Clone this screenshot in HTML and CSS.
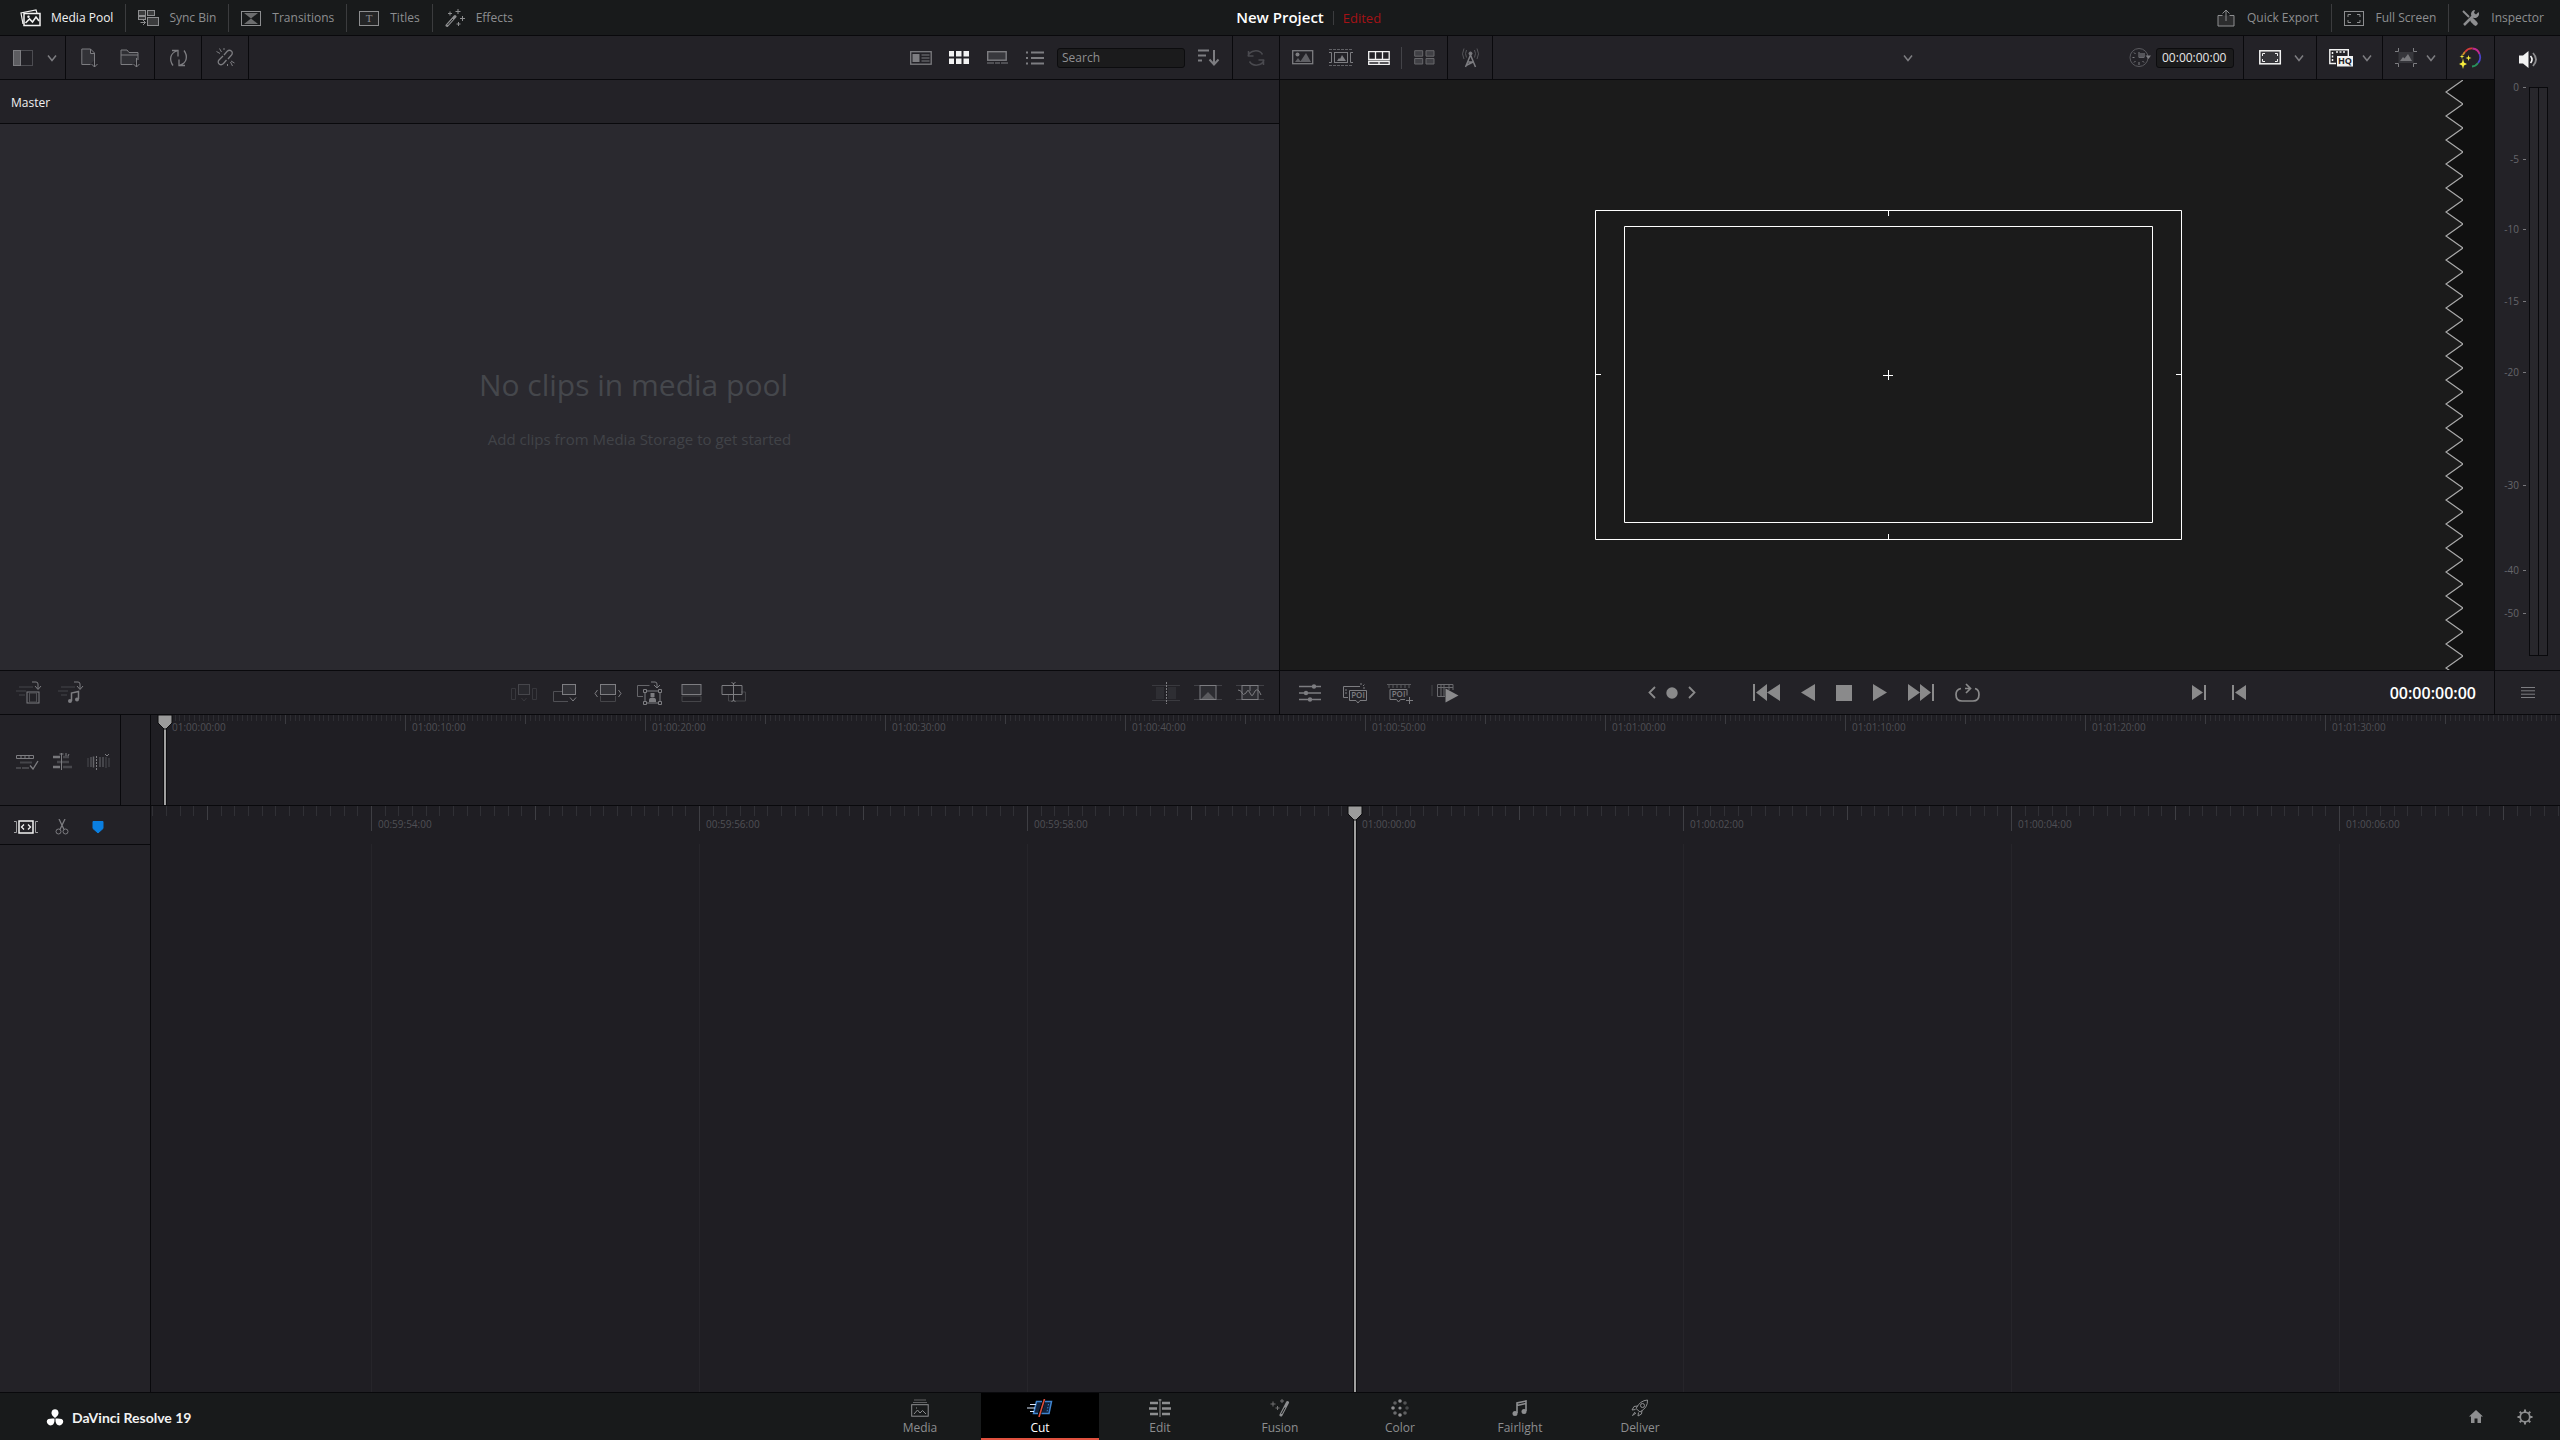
FILE: index.html
```html
<!DOCTYPE html>
<html lang="en">
<head>
<meta charset="utf-8">
<title>New Project</title>
<link rel="stylesheet" href="styles.css">
</head>
<body>
<svg class="defs" width="0" height="0" aria-hidden="true">
  <defs>
    <pattern id="p-overview" width="48" height="6" patternUnits="userSpaceOnUse">
      <path d="M.5 0v6M5.5 0v6M10.5 0v6M14.5 0v6M19.5 0v6M24.5 0v6M29.5 0v6M34.5 0v6M38.5 0v6M43.5 0v6" stroke="#2d2d32"/>
    </pattern>
    <pattern id="p-detail" width="41" height="10" patternUnits="userSpaceOnUse">
      <path d="M.5 0v10M14.5 0v10M27.5 0v10" stroke="#303035"/>
    </pattern>
    <pattern id="p-zig" width="18" height="24" patternUnits="userSpaceOnUse">
      <path d="M18 0L1 12L18 24V0z" fill="#101010" stroke="none"/>
      <path d="M18 0L1 12L18 24" fill="none" stroke="#a9a9a9" stroke-width="1.2"/>
    </pattern>
    <symbol id="chev" viewBox="0 0 10 8"><path d="M1 1.5L5 6.5L9 1.5" stroke-width="1.5"/></symbol>
    <symbol id="t240" viewBox="0 0 240 20"><rect width="240" height="6" fill="url(#p-overview)" stroke="none"/><path d="M.5 0v16M120.5 0v9" stroke="#3b3b40"/></symbol>
    <symbol id="t328" viewBox="0 0 328 26"><rect width="328" height="10" fill="url(#p-detail)" stroke="none"/><path d="M.5 0v25M164.5 0v14" stroke="#3e3e43"/></symbol>
    <symbol id="head" viewBox="0 0 16 16"><path d="M1 0h14v8L9 14H7L1 8z" fill="#9b9b9b" stroke="#0c0c0e"/></symbol>
  </defs>
</svg>
<div class="app">
  <header class="topbar">
    <nav class="tools" aria-label="Panels">
      <button class="on"><svg width="21" height="18"><path d="M3 15L1 4L16 1l1 3" stroke-width="1.2"/><rect x="4" y="4.500" width="16" height="12" stroke-width="1.5"/><path d="M5.500 14l4-4 3 3 3.500-5 3 4" stroke-width="1.6"/><circle cx="8.500" cy="7.800" r="1.2" fill="currentColor" stroke="none"/></svg>Media Pool</button>
      <button><svg width="21" height="18"><g fill="#3b3c3d"><rect x=".5" y="1.500" width="7" height="5"/><rect x="9.500" y="1.500" width="7" height="5"/><rect x=".5" y="7.500" width="7" height="3"/><rect x="9.500" y="8.500" width="11" height="8"/></g><path d="M2.500 13.500h5M5 11l2.500 2.500L5 16"/></svg>Sync Bin</button>
      <button><svg width="21" height="18"><rect x=".5" y="2.500" width="19" height="14"/><path d="M3 4h14L10 9.500zM3 15h14L10 9.500z" fill="#6c6d6e" stroke="none"/></svg>Transitions</button>
      <button><svg width="21" height="18"><rect x=".5" y="2.500" width="19" height="14" fill="#242526"/><text class="glyph serif" x="10" y="13" text-anchor="middle">T</text></svg>Titles</button>
      <button><svg width="21" height="20"><path d="M2 17.500L10 8.500" stroke-width="3" stroke-linecap="round"/><path d="M2.500 17L8 11" stroke="#181a1b" stroke-width="1"/><path d="M13 1v5M10.500 3.500h5M17.500 8v5M15 10.500h5M13.500 14v4M11.500 16h4M5 3.500v4M3 5.500h4"/></svg>Effects</button>
    </nav>
    <h1>New Project</h1>
    <div class="right">
      <span class="edited">Edited</span>
      <nav class="tools" aria-label="Workspace">
        <button><svg width="19" height="18"><path d="M5.500 6.500H1v10.500h16V6.500h-4.500" fill="#2c2d2e"/><path d="M9 12V1.500M5.500 4.500L9 1l3.500 3.500"/></svg>Quick Export</button>
        <button><svg width="21" height="18"><rect x=".5" y="2.500" width="19" height="14"/><path d="M4 8V5.500h3M13 5.500h3V8M16 11v2.500h-3M7 13.500H4V11"/></svg>Full Screen</button>
        <button><svg width="19" height="18"><path d="M2 2l6 6" stroke-width="2"/><path d="M11.500 11.500l3 3" stroke-width="4.500" stroke-linecap="round"/><path d="M3 16L12 7" stroke-width="2.500"/><path d="M17.500 3a4 4 0 1 1-3.500-2l-1 3 2 1.500z" fill="currentColor" stroke="none"/></svg>Inspector</button>
      </nav>
    </div>
  </header>

  <main class="upper">
    <section class="panel" aria-label="Media Pool">
      <div class="toolbar">
        <div class="grp g-first">
          <button aria-label="Sidebar"><svg width="21" height="18"><rect x=".5" y="1.500" width="19" height="15" stroke="#4c4c51"/><rect x=".5" y="1.500" width="7" height="15" fill="#5d5d61"/></svg></button>
          <button aria-label="Sidebar options"><svg width="10" height="8"><use href="#chev"/></svg></button>
        </div>
        <div class="grp b40">
          <button aria-label="Import media"><svg width="18" height="20"><path d="M9.500 16.500H.8V1h8.700l4 4v7M9.500 1v4.500h4" fill="#333338"/><path d="M13.500 8v11M10.500 16l3 3 3-3"/></svg></button>
          <button aria-label="Import folder"><svg width="21" height="20"><path d="M12.500 16.500H1V2h6l2 2.500h9V12M1 7h17" fill="#303035"/><path d="M16.500 10v9M13.500 16l3 3 3-3"/></svg></button>
        </div>
        <div class="grp b46"><button aria-label="Sync clips"><svg width="19" height="18"><g stroke-width="1.300"><path d="M4 16.500C0 11 1 4 8 2M3 1.500h6v6"/><path d="M15 1.500C19 7 18 14 11 16M16 16.500h-6v-6"/></g></svg></button></div>
        <div class="grp b46"><button aria-label="Unlink clips"><svg width="19" height="19"><path d="M8 7l3-3.500c3-3 7 .5 4.500 3.500L12 11M10.500 12l-3 3.500c-3 3-7-.5-4.500-3.500L7 8" stroke-width="1.300"/><path d="M.5 3.500L4 5.500M3.500.5l2 3.500M8 0v2M14.500 14l2 4M15 13l3.500 2M11.500 16v2"/></svg></button></div>
        <div class="grp push b38">
          <button aria-label="Metadata view"><svg width="22" height="14"><rect x=".7" y=".7" width="20.500" height="12.500" stroke-width="1.300"/><path d="M2.500 3h7v8h-7z" fill="currentColor" stroke="none"/><path d="M11.500 4h8M11.500 7h8M11.500 10h8"/></svg></button>
          <button class="on" aria-label="Thumbnail view"><svg width="20" height="13"><path d="M0 0h5v5.500H0zM7 0h5.500v5.500H7zM14.500 0H20v5.500h-5.500zM0 7.500h5V13H0zM7 7.500h5.500V13H7zM14.500 7.500H20V13h-5.500z" fill="currentColor" stroke="none"/></svg></button>
          <button aria-label="Filmstrip view"><svg width="21" height="13"><rect x=".7" y=".7" width="18.500" height="8.500" fill="#38383d" stroke-width="1.400"/><path d="M0 12h7M8 12h5M14 12h7"/></svg></button>
          <button aria-label="List view"><svg width="18" height="14"><path d="M0 1.500h2M0 7h2M0 12.500h2M5 1.500h13M5 7h13M5 12.500h13" stroke-width="2"/></svg></button>
        </div>
        <input class="search" type="text" placeholder="Search" aria-label="Search">
        <div class="grp b46"><button aria-label="Sort"><svg width="22" height="17"><path d="M0 1.500h11M0 6.500h8M0 11.500h4M16 1v14M11.500 10.500l4.500 5 4.500-5" stroke-width="2"/></svg></button></div>
        <div class="grp b46 last"><button class="dim" aria-label="Refresh"><svg width="18" height="18"><path d="M1 7C3 1 12 0 15.500 5.500M1.500 2v5h5M17 11c-2 6-11 7-14.500 1.500M16.500 16v-5h-5" stroke-width="1.500"/></svg></button></div>
      </div>
      <h2 class="bin">Master</h2>
      <div class="empty"><p class="big">No clips in media pool</p><p>Add clips from Media Storage to get started</p></div>
      <div class="actions pool-actions">
        <div class="row b42">
          <button aria-label="Video only"><svg width="26" height="23"><path d="M3 6h14M0 10h10M3 14h6" stroke="#3a3a3f" stroke-width="1.500"/><path d="M16 1h4q2 0 2 2v5M19 5l3 3.500L25 5"/><rect x="11" y="11" width="12" height="11"/><rect x="13.500" y="12" width="7" height="9" stroke="#505055"/></svg></button>
          <button aria-label="Audio only"><svg width="26" height="23"><path d="M3 6h14M0 10h10M3 14h6" stroke="#3a3a3f" stroke-width="1.500"/><path d="M16 1h4q2 0 2 2v5M19 5l3 3.500L25 5"/><path d="M13.500 20v-8l7-1.500V18" stroke-width="1.500"/><circle cx="12" cy="20" r="2" fill="currentColor" stroke="none"/><circle cx="19" cy="18.500" r="2" fill="currentColor" stroke="none"/></svg></button>
        </div>
        <div class="row b42 mid">
          <button class="faint" aria-label="Smart insert"><svg width="26" height="20"><path d="M.5 5.500h4v11h-4zM21.500 5.500h4v11h-4z"/><rect x="7.500" y="1.500" width="11" height="10" fill="#29292e" stroke="#46464b"/><path d="M10.500 15l2.500 3 2.500-3"/></svg></button>
          <button aria-label="Append"><svg width="26" height="20"><path d="M9 8.500H.5v10H15" stroke="#505055"/><rect x="9.500" y="1.500" width="13" height="10" fill="#333338"/><path d="M17 14.500l3 3.500 3-3.500"/></svg></button>
          <button aria-label="Ripple overwrite"><svg width="28" height="20"><path d="M6.500 13v5.500h15V13" stroke="#454549"/><rect x="6.500" y="1.500" width="15" height="10" fill="#333338"/><path d="M3.500 7L1 10.500 3.500 14M24.500 7l2.500 3.500-2.500 3.500"/></svg></button>
          <button aria-label="Close up"><svg width="26" height="24"><path d="M6 15.500H.5v-11h12" stroke="#66666a"/><path d="M14 1h4q2 0 2 2v3M17 4l3 3 3-3"/><rect x="8" y="10" width="15" height="12"/><path d="M12 21v-2q0-2.500 3.500-2.500t3.500 2.500v2zM13.500 12h4v4h-4z" fill="currentColor" stroke="none"/><path d="M6.500 8.500h3v3h-3zM21.500 8.500h3v3h-3zM6.500 20.500h3v3h-3zM21.500 20.500h3v3h-3z" fill="#232227"/></svg></button>
          <button aria-label="Place on top"><svg width="22" height="20"><path d="M1 13v5.500h19V13z" stroke="#454549"/><rect x="1" y="1.500" width="19" height="10" fill="#333338"/></svg></button>
          <button aria-label="Source overwrite"><svg width="26" height="21"><path d="M20 10h4.500v9h-17v-6" stroke="#454549"/><path d="M1 3.500h20v9H1zM12.500 1v18"/><path d="M10.500 0l2 2 2-2M10.500 20l2-2 2 2"/></svg></button>
        </div>
        <div class="row b42 end">
          <button aria-label="Cut"><svg width="28" height="22"><path d="M0 3.500h28M0 18.500h28" stroke="#3a3a3f"/><path d="M4 5h8v12H4zM16 5h8v12h-8z" fill="#2e2e33" stroke="none"/><path d="M14.500 0v22" stroke-dasharray="2 1"/></svg></button>
          <button aria-label="Dissolve"><svg width="28" height="18"><path d="M0 1.500h28M0 15.500h28" stroke="#414146"/><rect x="6" y="1.500" width="16" height="14" fill="#2d2d32"/><path d="M14 2v6L7 15h14l-7-7" fill="#5a5a5e" stroke="none"/></svg></button>
          <button aria-label="Smooth cut"><svg width="28" height="18"><path d="M0 1.500h28M0 15.500h28" stroke="#414146"/><rect x="6" y="1.500" width="16" height="14" fill="#2d2d32"/><path d="M2 6q3 0 4 3t4 0q2-5 4 0t4 0q2-5 5-2l2 4M14 2v5"/></svg></button>
        </div>
      </div>
    </section>

    <section class="panel" aria-label="Viewer">
      <div class="toolbar">
        <div class="grp b38 views">
          <button aria-label="Source clip"><svg width="22" height="15"><rect x=".7" y=".7" width="20" height="13" stroke-width="1.300"/><circle cx="5.500" cy="4.500" r="2" fill="currentColor" stroke="none"/><path d="M3 12l3-4 3 4M8 12l6-9 5 9z" fill="#606065" stroke="none"/></svg></button>
          <button aria-label="Source tape"><svg width="24" height="17"><path d="M0 .5h24M0 16.500h24" stroke-dasharray="3 1" stroke="#606065"/><rect x="5.500" y="3.500" width="13" height="10"/><path d="M0 3.500h2.500v10H0M24 3.500h-2.500v10H24"/><path d="M8 12l2-3 1 1 2-4 4 6z" fill="currentColor" stroke="none"/></svg></button>
          <button class="on" aria-label="Timeline"><svg width="22" height="14"><path d="M.7.7h20.500v7.800H.7zM.7 10.500h20.500v2.800H.7zM7.500 1v7M14.500 1v7M11 10.500v3" stroke-width="1.300"/></svg></button>
          <span class="tick"></span>
          <button aria-label="Multi view"><svg width="21" height="15"><path d="M.7.7h8v5.500h-8zM12 .7h8v5.500h-8zM.7 8.500h8V14h-8zM12 8.500h8V14h-8z" fill="#404045" stroke="#67676b"/></svg></button>
        </div>
        <div class="grp b44"><button aria-label="Live overwrite"><svg width="17" height="20"><path d="M8.500 7L3.500 19M8.500 7l5 12M5 14h7M4 17.500l8-4" stroke-width="1.500"/><circle cx="8.500" cy="5.500" r="1.500" fill="currentColor"/><path d="M4.500 9.500q-2-4 0-7.500M12.500 9.500q2-4 0-7.500M2 11q-3-5 0-10.500M15 11q3-5 0-10.500" stroke="#56565a"/></svg></button></div>
        <div class="title-menu"><button aria-label="Timelines"><svg width="10" height="8"><use href="#chev"/></svg></button></div>
        <div class="grp tc">
          <button aria-label="Timeline duration"><svg width="22" height="21"><circle cx="10" cy="10.500" r="9" stroke="#5a5a5f"/><path d="M10 5v5.500h5M10 15v3M3.500 10.500h2M5 5.500l1.500 1.500M5 15.500L6.500 14M15 15.500L13.500 14"/><path d="M10 6h6v4.500h-6z" fill="#55555a" stroke="none"/><path d="M16.500 8.500h5.500L19.500 12z" fill="currentColor" stroke="none"/></svg></button>
          <input class="timecode" type="text" value="00:00:00:00" aria-label="Duration">
        </div>
        <div class="grp g-ar">
          <button class="on" aria-label="Resolution"><svg width="23" height="15"><rect x=".8" y=".8" width="20.500" height="13" fill="#35353a" stroke-width="1.500"/><path d="M3.500 6V3.500H6M16 3.500h2.500V6M18.500 9v2.500H16M6 11.500H3.500V9"/></svg></button>
          <button aria-label="Resolution options"><svg width="10" height="8"><use href="#chev"/></svg></button>
        </div>
        <div class="grp g-drop">
          <button class="on" aria-label="Proxy quality"><svg width="24" height="18"><path d="M7 14.500H.8V.8h18.500V7" stroke-width="1.400"/><path d="M3.500 3v10M7 3h10" stroke-dasharray="2 1.500" stroke-width="1.500"/><rect x="8" y="7" width="16" height="10.500" fill="#f2f2f2" stroke="none"/><text class="glyph dark" x="16" y="15" text-anchor="middle">HQ</text></svg></button>
          <button aria-label="Proxy options"><svg width="10" height="8"><use href="#chev"/></svg></button>
        </div>
        <div class="grp g-drop">
          <button aria-label="Transform overlay"><svg width="22" height="19"><path d="M0 3.500h3.500V0M22 3.500h-3.500V0M0 15.500h3.500V19M22 15.500h-3.500V19"/><path d="M3.500 4h15v11h-15z" fill="#36363b" stroke="none"/><path d="M5 13l3-4 1.500 1.500L13 6l4 7z" fill="#77777b" stroke="none"/></svg></button>
          <button aria-label="Overlay options"><svg width="10" height="8"><use href="#chev"/></svg></button>
        </div>
        <div class="grp b46"><button aria-label="Bypass grades"><svg width="23" height="22"><g stroke-width="1.800"><path d="M6 5Q9 1 13.500 1.500" stroke="#d43b3b"/><path d="M13.500 1.500Q19 2 20.500 7" stroke="#c02a8f"/><path d="M20.500 7Q22.500 12 19 16" stroke="#4a43c8"/><path d="M19 16q-2 3-6 3.500" stroke="#28905c"/><path d="M6 5Q4.500 6.500 4 8" stroke="#cf8a28"/></g><path d="M4 11.500l1 4 3 1.500-3 1.500-1 3.500-1-3.500L0 17l3-1.500zM9.500 8l.7 2.300 2.300.7-2.300.7-.7 2.300-.7-2.300-2.300-.7 2.300-.7zM3 7l.6 1.900L5.500 9.500l-1.900.6L3 12l-.6-1.900L.5 9.500l1.900-.6z" fill="#f5ec3d" stroke="none"/></svg></button></div>
      </div>
      <div class="screen">
        <svg class="safe" viewBox="0 0 588 330" width="588" height="330"><path d="M.5.5h586v329H.5zM29.500 16.500h528v296h-528zM293.500 1v5M293.500 324v5M1 164.500h5M581 164.500h5M288 165.500h10M293.500 160v10" stroke="#fff"/></svg>
        <svg class="zigzag" width="18" height="100%"><rect width="18" height="100%" fill="url(#p-zig)" stroke="none"/></svg>
        <div class="margin"></div>
      </div>
      <div class="actions viewer-actions">
        <div class="row b45">
          <button aria-label="Tools"><svg width="22" height="18"><path d="M0 2.500h22M0 9h22M0 15.500h22" stroke-width="1.500"/><circle cx="15" cy="2.500" r="2.200" fill="currentColor" stroke="none"/><circle cx="7" cy="9" r="2.200" fill="currentColor" stroke="none"/><circle cx="11" cy="15.500" r="2.200" fill="currentColor" stroke="none"/></svg></button>
          <button aria-label="POI list"><svg width="24" height="22"><path d="M5 15.500H.5v-11H17" /><path d="M3 7v6M18 1v3M20 4l2-2M20 6h3" stroke-dasharray="2 1"/><path d="M6.500 8.500h17v10H17L15 21l-2-2.500H6.500z" fill="#232227"/><text class="glyph" x="15" y="16" text-anchor="middle">POI</text></svg></button>
          <button aria-label="Add POI"><svg width="26" height="22"><path d="M0 2.500h24M2 3v3M6 3v3M10 3v3M14 3v3M18 3v3M22 3v3" stroke="#5a5a5e"/><path d="M18 17.500h-4.500L11.500 20l-2-2.500H3v-10h17v6"/><text class="glyph" x="11.500" y="15" text-anchor="middle">POI</text><path d="M19 18.500h7M22.500 15v7"/></svg></button>
          <button aria-label="Fast review"><svg width="28" height="20"><path d="M1 2v11" stroke="#444449"/><path d="M14 13.500H6.500V1.500H22V7M6.500 4.500H22M10 2v11M13 2v11M18 2v5" stroke="#6b6b6f"/><path d="M14.500 5.500L27.500 12.500 14.500 19.500z" fill="#8a8a8c" stroke="none"/></svg></button>
        </div>
        <div class="transport">
          <div class="jog">
            <button aria-label="Previous clip"><svg width="8" height="13"><path d="M7 1L1.500 6.500 7 12" stroke-width="1.800"/></svg></button>
            <button aria-label="Jog"><svg width="12" height="12"><circle cx="6" cy="6" r="5.700" fill="currentColor" stroke="none"/></svg></button>
            <button aria-label="Next clip"><svg width="8" height="13"><path d="M1 1l5.500 5.500L1 12" stroke-width="1.800"/></svg></button>
          </div>
          <button aria-label="First frame"><svg class="solid" width="27" height="17"><path d="M0 0h2v17H0zM14 0v17L3 8.500zM27 0v17L14 8.500z"/></svg></button>
          <button aria-label="Play reverse"><svg class="solid" width="14" height="17"><path d="M14 0v17L0 8.500z"/></svg></button>
          <button aria-label="Stop"><svg class="solid" width="16" height="16"><path d="M0 0h16v16H0z"/></svg></button>
          <button aria-label="Play"><svg class="solid" width="14" height="17"><path d="M0 0v17L14 8.500z"/></svg></button>
          <button aria-label="Last frame"><svg class="solid" width="26" height="17"><path d="M24 0h2v17h-2zM12 0v17L23 8.500zM0 0v17L12 8.500z"/></svg></button>
          <button aria-label="Loop"><svg width="25" height="20"><path d="M6 5.500Q1 6.500 1 11.500 1 18 7 18h11q6 0 6-6.500 0-5-4-6M10 5.500h5M11 1l4.500 4.500L11 10" stroke-width="1.700"/></svg></button>
        </div>
        <div class="marks">
          <button aria-label="Mark in"><svg class="solid" width="14" height="17"><path d="M0 1v15l11-7.500zM12 1h2v15h-2z"/></svg></button>
          <button aria-label="Mark out"><svg class="solid" width="14" height="17"><path d="M14 1v15L3 8.500zM0 1h2v15H0z"/></svg></button>
          <output class="clock">00:00:00:00</output>
        </div>
      </div>
    </section>

    <aside class="panel meter" aria-label="Audio meter">
      <div class="speaker"><button class="on" aria-label="Mute"><svg width="19" height="17"><path d="M0 4.500h4L9.500 0v17L4 12.500H0z" fill="currentColor" stroke="none"/><path d="M11.500 5q3 3.500 0 7" stroke-width="1.600"/><path d="M14 2q6 6.500 0 13" stroke-width="1.800" stroke="#8c8c8e"/></svg></button></div>
      <div class="scale">
        <ol>
          <li class="s72">0</li><li class="s70">-5</li><li class="s72">-10</li><li class="s71">-15</li><li class="s114">-20</li><li class="s85">-30</li><li class="s43">-40</li><li class="s43">-50</li>
        </ol>
        <div class="bars"><i></i><i></i></div>
      </div>
      <div class="actions menu"><button aria-label="Timeline menu"><svg width="14" height="11"><path d="M0 .5h14M0 3.800h14M0 7.200h14M0 10.500h14"/></svg></button></div>
    </aside>
  </main>

  <section class="timeline" aria-label="Timeline">
    <div class="side-top">
      <div class="side-tools">
        <button aria-label="Timeline options"><svg width="23" height="16"><path d="M.5 1.500h17v3H.5zM5 1.500v3M9 1.500v3M13 1.500v3" /><path d="M4 8.500h12M0 14h5" stroke="#45454a" stroke-width="2"/><path d="M6 14h7" stroke="#45454a" stroke-width="2"/><path d="M14 11.500l3 3.500 5-8" stroke-width="1.300"/></svg></button>
        <button aria-label="Split clips"><svg width="20" height="17"><path d="M0 4h7M0 14h7" stroke="#77777b" stroke-width="2.500"/><path d="M4 9h12M10 4h6M10 14h9" stroke="#47474c" stroke-width="2.500"/><path d="M8.500 0v17M6.500 1h4M13 0v3M16 1l-1 2" /></svg></button>
        <button aria-label="Trim view"><svg width="24" height="18"><path d="M1 5v9M19 4v11M22 5v9" stroke="#36363b" stroke-width="2"/><path d="M4 4v10M13 4v10M16 4v10" stroke="#45454a" stroke-width="2"/><path d="M6.500 3.500v11" stroke="#66666a" stroke-width="1.500"/><path d="M9.500 3v14" stroke-dasharray="2 1"/><path d="M18 1l2 2 2-2"/></svg></button>
      </div>
      <div class="side-gap"></div>
    </div>
    <div class="overview">
      <div class="seg"><svg width="240" height="20"><use href="#t240"/></svg><span>01:00:00:00</span></div>
      <div class="seg"><svg width="240" height="20"><use href="#t240"/></svg><span>01:00:10:00</span></div>
      <div class="seg"><svg width="240" height="20"><use href="#t240"/></svg><span>01:00:20:00</span></div>
      <div class="seg"><svg width="240" height="20"><use href="#t240"/></svg><span>01:00:30:00</span></div>
      <div class="seg"><svg width="240" height="20"><use href="#t240"/></svg><span>01:00:40:00</span></div>
      <div class="seg"><svg width="240" height="20"><use href="#t240"/></svg><span>01:00:50:00</span></div>
      <div class="seg"><svg width="240" height="20"><use href="#t240"/></svg><span>01:01:00:00</span></div>
      <div class="seg"><svg width="240" height="20"><use href="#t240"/></svg><span>01:01:10:00</span></div>
      <div class="seg"><svg width="240" height="20"><use href="#t240"/></svg><span>01:01:20:00</span></div>
      <div class="seg"><svg width="240" height="20"><use href="#t240"/></svg><span>01:01:30:00</span></div>
      <div class="playhead at-start"><svg width="16" height="16"><use href="#head"/></svg></div>
    </div>
    <div class="side-bottom">
      <div class="side-modes">
        <button class="on" aria-label="Trim mode"><svg width="24" height="14"><rect x="5" y="1" width="14" height="12" stroke-width="1.500"/><path d="M10 4.500L7.500 7l2.500 2.500M14 4.500L16.500 7 14 9.500" stroke-width="1.300"/><path d="M0 1.500h2.500v11H0M24 1.500h-2.500v11H24" stroke="#a0a0a2"/></svg></button>
        <button aria-label="Split"><svg width="14" height="16"><path d="M4 0l5 10.500M10 0L5 10.500" stroke-width="1.300"/><circle cx="3.500" cy="12.500" r="2.500"/><circle cx="10.500" cy="12.500" r="2.500"/></svg></button>
        <button class="flag" aria-label="Marker"><svg width="12" height="14"><path d="M1 1.500h10v7L6 13 1 8.500z" fill="#0a7fe0" stroke="#0a7fe0"/></svg></button>
      </div>
    </div>
    <div class="detail">
      <div class="seg"><svg width="328" height="26"><use href="#t328"/></svg></div>
      <div class="seg"><svg width="328" height="26"><use href="#t328"/></svg><span>00:59:54:00</span></div>
      <div class="seg"><svg width="328" height="26"><use href="#t328"/></svg><span>00:59:56:00</span></div>
      <div class="seg"><svg width="328" height="26"><use href="#t328"/></svg><span>00:59:58:00</span></div>
      <div class="seg"><svg width="328" height="26"><use href="#t328"/></svg><span>01:00:00:00</span></div>
      <div class="seg"><svg width="328" height="26"><use href="#t328"/></svg><span>01:00:02:00</span></div>
      <div class="seg"><svg width="328" height="26"><use href="#t328"/></svg><span>01:00:04:00</span></div>
      <div class="seg"><svg width="328" height="26"><use href="#t328"/></svg><span>01:00:06:00</span></div>
      <div class="playhead at-zero"><svg width="16" height="16"><use href="#head"/></svg></div>
    </div>
  </section>

  <footer class="pages">
    <div class="brand"><svg width="18" height="17"><g fill="#fff" stroke="none"><path d="M9 9Q5 6 5.500 3.500 6 .3 9 .3t3.500 3.200Q13 6 9 9z"/><path d="M8.500 9.500q.3 5-2.200 6.500-2.800 1.300-4.700-1.200-2-3 .8-4.700 2-1 6.100-.6zM9.500 9.500q-.3 5 2.200 6.500 2.800 1.300 4.700-1.200 2-3-.8-4.700-2-1-6.100-.6z"/></g></svg>DaVinci Resolve 19</div>
    <nav aria-label="Pages">
      <a href="#media"><svg width="18" height="18"><path d="M3 1h12M2 3.500h14" stroke="#606163"/><rect x=".7" y="5.700" width="16.500" height="11.500"/><path d="M3 15l3.500-4 2.500 3 2.500-2.500 3.500 3.500M5 9h1" /></svg>Media</a>
      <a href="#cut" class="active"><svg width="26" height="18"><path d="M15 2.500H9.500L6.500 14.500h4.500M18 2.500h6.500l-2.500 12H14.500" stroke="#3f83cd" stroke-width="1.500" fill="#10233e"/><path d="M21.500 5l-1.500 8" stroke="#3f83cd" stroke-dasharray="1.500 1.500"/><path d="M3 5.500h6M0 9h8M3 12.500h4" stroke="#d8e8ff"/><path d="M17.500 0L12 18" stroke="#e0503e" stroke-width="1.600"/></svg>Cut</a>
      <a href="#edit"><svg width="22" height="18"><path d="M1 4h8M0 9.500h8M1 15h8M13 4h8M13 9.500h9M13 15h8" stroke-width="2.600"/><path d="M11 0v18M9.500 1h3"/></svg>Edit</a>
      <a href="#fusion"><svg width="20" height="18"><path d="M11 16L17.500 3.500" stroke-width="3" stroke-linecap="round"/><path d="M11.500 15L15 8.500" stroke="#181a1b"/><path d="M3 2.500v5M.5 5h5M7.500 7v4M5.500 9h4M12 0v4M10 2h4" stroke="#707173"/></svg>Fusion</a>
      <a href="#color"><svg width="18" height="18"><g fill="currentColor" stroke="none"><circle cx="9" cy="2" r="1.800"/><circle cx="14" cy="4" r="1.800" opacity=".5"/><circle cx="16" cy="9" r="1.800" opacity=".4"/><circle cx="14" cy="14" r="1.800" opacity=".6"/><circle cx="9" cy="16" r="1.800"/><circle cx="4" cy="14" r="1.800" opacity=".7"/><circle cx="2" cy="9" r="1.800"/><circle cx="4" cy="4" r="1.800" opacity=".6"/><circle cx="9" cy="9" r="1.600"/></g></svg>Color</a>
      <a href="#fairlight"><svg width="18" height="18"><path d="M6 14V4l9-2v10M6 6.500l9-2" stroke-width="1.600"/><circle cx="4" cy="14.500" r="2.500" fill="currentColor" stroke="none"/><circle cx="13" cy="12.500" r="2.500" fill="currentColor" stroke="none"/></svg>Fairlight</a>
      <a href="#deliver"><svg width="18" height="18"><path d="M5 9.500Q9 1.500 16.500 1 17 8.500 9 13zM6.500 7L3 7.500 1 11l3.500-.5M11 11.500l-.5 3.500L7 17l.5-3.500M4 13l-2.500 3.500L5 14"/><circle cx="11.500" cy="6.500" r="2"/></svg>Deliver</a>
    </nav>
    <div class="corner">
      <button aria-label="Project manager"><svg class="solid" width="14" height="13"><path d="M7 0l7 6.500h-2V13H8.500V8.500h-3V13H2V6.500H0z"/></svg></button>
      <button aria-label="Project settings"><svg width="16" height="16"><circle cx="8" cy="8" r="4.800" stroke-width="1.800"/><path d="M8 .5v2.500M8 13v2.500M.5 8H3M13 8h2.500M2.700 2.700l1.700 1.700M11.600 11.600l1.700 1.700M2.700 13.300l1.700-1.700M11.600 4.400l1.700-1.700" stroke-width="2"/></svg></button>
    </div>
  </footer>
</div>
</body>
</html>
```
FILE: styles.css
```css
* { box-sizing: border-box; }
body {
  margin: 0;
  background: #181a1b;
  color: #8d8e90;
  font: 12px/16px "Open Sans", "Noto Sans", sans-serif;
  overflow: hidden;
}
h1, h2, p, ol { margin: 0; padding: 0; font-weight: 400; }
.defs { position: absolute; }
svg { display: block; flex: none; fill: none; stroke: currentColor; }
svg.solid { fill: currentColor; stroke: none; }
.glyph { fill: currentColor; stroke: none; font: 600 8px "Open Sans", sans-serif; }
.glyph.serif { font: 11px "Liberation Serif", serif; }
.glyph.dark { fill: #232227; font-weight: 700; font-size: 9px; }
button {
  display: flex; align-items: center; justify-content: center;
  margin: 0; padding: 0; border: 0; background: none;
  color: #7d7d81; font: inherit;
}
button.on { color: #f2f2f2; }
button.dim { color: #4a4a4f; }
button.faint { color: #37373c; }

.app {
  display: grid;
  grid-template-rows: 36px minmax(0, 679fr) minmax(0, 677fr) 48px;
  height: 100vh;
}

/* top bar */
.topbar {
  display: grid; grid-template-columns: 1fr auto 1fr; align-items: stretch;
  border-bottom: 1px solid #09090c;
}
.topbar h1 {
  color: #fff; font-size: 15px; font-weight: 600; line-height: 34px;
}
.tools { display: flex; align-items: center; padding-top: 1px; }
.tools button { height: 28px; gap: 10px; padding: 0 12px; color: #8d8e90; border-right: 1px solid #3b3c3e; }
.tools button:last-child { border-right: 0; }
.tools button.on { color: #f2f2f2; }
.topbar > .tools { padding-left: 8px; }
.right { display: flex; align-items: center; justify-content: space-between; }
.edited { margin-left: 9px; padding-left: 9px; border-left: 1px solid #3b3c3e; color: #a51216; font-size: 13px; line-height: 14px; }
.right .tools { padding-right: 4px; }
.right .tools button { gap: 11px; }

/* upper panels */
.upper { display: grid; grid-template-columns: 50% minmax(0, 1fr) 65px; }
.panel {
  display: flex; flex-direction: column; min-width: 0; min-height: 0;
  background: #232227; border-right: 1px solid #09090c;
}
.panel.meter { border-right: 0; }
.toolbar { display: flex; align-items: center; height: 44px; flex: none; border-bottom: 1px solid #09090c; }
.grp { display: flex; align-items: center; height: 43px; border-right: 1px solid #09090c; }
.grp.push { margin-left: auto; border: 0; }
.toolbar > .grp:last-child { border-right: 0; }
.b40 { padding: 0 4px; }
.b40 button { width: 40px; }
.b46 button { width: 46px; }
.b44 button { width: 44px; }
.b38 button { width: 38px; }
.g-first { padding: 0 8px 0 13px; gap: 13px; }
.search, .timecode {
  height: 20px; padding: 0 4px; border: 1px solid #0c0c0e; border-radius: 3px;
  background: #1b1b1c; color: #e8e8e8; font: inherit;
}
.search { width: 128px; margin: 0 1px 0 3px; }
.search::placeholder { color: #909092; opacity: 1; }
.views { padding: 0 4px; }
.tick { width: 1px; height: 22px; margin: 0 3px; background: #434348; }
.title-menu { display: flex; flex: 1; justify-content: flex-end; padding-right: 216px; }
.tc { gap: 5px; padding-right: 9px; }
.timecode { width: 78px; padding: 0 5px; }
.g-ar { padding: 0 12px 0 15px; gap: 12px; }
.g-drop { padding: 0 10px 0 12px; gap: 9px; }
.g-drop + .b46 { padding-right: 1px; }

.bin { height: 44px; flex: none; padding-left: 11px; border-bottom: 1px solid #09090c; color: #f0f0f0; font-size: 12px; line-height: 45px; }
.empty {
  display: flex; flex: 1; flex-direction: column; align-items: center; justify-content: center; gap: 24px;
  padding-top: 19px; background: #2a292f; color: #414348; font-size: 15px; line-height: 20px;
}
.empty .big { padding-right: 12px; color: #45474c; font-size: 30px; line-height: 40px; }

.actions { height: 45px; flex: none; border-top: 1px solid #09090c; border-bottom: 1px solid #09090c; }
.row { display: flex; align-items: center; }
.b42 button { width: 42px; }
.b45 button { width: 45px; }
.pool-actions { display: grid; grid-template-columns: 1fr auto 1fr; padding: 0 8px; }
.mid { padding-right: 22px; }
.end { justify-content: flex-end; }
.viewer-actions { display: grid; grid-template-columns: auto 1fr auto; align-items: center; padding: 0 18px 0 7px; }
.transport { display: flex; align-items: center; justify-content: center; gap: 21px; }
.transport button, .marks button { color: #8a8a8b; }
.jog { display: flex; margin-right: 30px; }
.jog button { width: 20px; }
.marks { display: flex; align-items: center; gap: 26px; padding-left: 36px; }
.clock { margin-left: 118px; color: #fff; font-size: 16px; font-weight: 600; line-height: 20px; }

.screen { display: grid; grid-template-columns: 182px 1fr 18px 31px; align-items: center; flex: 1; min-height: 0; background: #1b1b1b; }
.safe { grid-column: 1 / 5; grid-row: 1; justify-self: center; margin-left: 3px; }
.zigzag { grid-column: 3; grid-row: 1; }
.margin { grid-column: 4; grid-row: 1; align-self: stretch; background: #101010; }

.speaker { display: flex; align-items: center; justify-content: center; height: 44px; padding: 3px 0 0 2px; }
.scale { display: flex; flex: 1; min-height: 0; padding-bottom: 7px; }
.scale ol { display: flex; flex-direction: column; width: 34px; padding-bottom: 14px; list-style: none; color: #66666b; font-size: 10px; line-height: 14px; text-align: right; }
.scale li { min-height: 0; padding-right: 10px; background: linear-gradient(#77777b, #77777b) 28px 7px / 3px 1px no-repeat; }
.s72 { flex: 72 0 0; }
.s70 { flex: 70 0 0; }
.s71 { flex: 71 0 0; }
.s114 { flex: 114 0 0; }
.s85 { flex: 85 0 0; }
.s43 { flex: 43 0 0; }
.bars { display: flex; width: 19px; margin: 7px 0; border: 1px solid #09090c; background: #28272c; }
.bars i { flex: 1; }
.bars i:first-child { border-right: 1px solid #09090c; }
.menu { display: flex; align-items: center; justify-content: center; padding-left: 1px; }

/* timeline */
.timeline { display: grid; grid-template: 91px minmax(0, 1fr) / 151px minmax(0, 1fr); background: #1f1e23; }
.side-top { display: flex; background: #232227; border-right: 1px solid #09090c; border-bottom: 1px solid #09090c; }
.side-tools { display: flex; align-items: center; gap: 14px; width: 121px; padding: 3px 0 0 16px; border-right: 1px solid #09090c; }
.side-bottom { background: #232227; border-right: 1px solid #09090c; }
.side-modes { display: flex; align-items: center; gap: 17px; height: 39px; padding: 3px 0 0 14px; border-bottom: 1px solid #09090c; }
.side-modes .flag { margin-left: 6px; }
.overview, .detail { position: relative; display: flex; overflow: hidden; color: #505055; font-size: 10px; line-height: 14px; }
.overview { padding-left: 14px; border-bottom: 1px solid #09090c; }
.seg { display: grid; flex: none; align-content: start; }
.seg > * { grid-area: 1 / 1; }
.overview .seg { width: 240px; }
.overview span { padding: 5px 0 0 7px; }
.detail .seg { width: 328px; background: linear-gradient(#26252a, #26252a) 0 38px / 1px 100% no-repeat; }
.detail .seg:first-child { margin-left: -108px; }
.detail span { padding: 11px 0 0 7px; }
.playhead { position: absolute; top: 0; bottom: 0; width: 16px; background: linear-gradient(90deg, #0f0f12 1px, #a0a0a0 1px, #a0a0a0 3px, #0f0f12 3px) 6px 0 / 4px 100% no-repeat; }
.at-start { left: 6px; }
.at-zero { left: 1196px; }

/* page switcher */
.pages { display: grid; grid-template-columns: 1fr auto 1fr; border-top: 1px solid #09090c; }
.brand { display: flex; align-items: center; gap: 8px; padding: 2px 0 0 46px; color: #f2f2f2; font: 700 14px/20px Lato, sans-serif; }
.pages nav { display: flex; }
.pages a {
  display: flex; flex-direction: column; align-items: center; gap: 3px;
  width: 118px; margin: 0 1px; padding-top: 6px; color: #8d8e90; text-decoration: none;
}
.pages a.active { background: #000; color: #fff; border-bottom: 2px solid #e0503e; }
.corner { display: flex; align-items: center; justify-content: flex-end; gap: 34px; padding-right: 27px; }
.corner button { color: #8d8e90; }
```
